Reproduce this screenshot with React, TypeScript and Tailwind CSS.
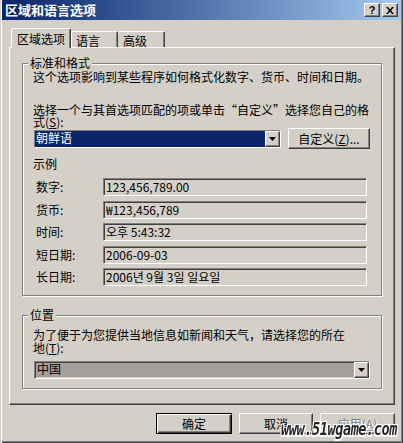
const raised =
  "border border-t-white border-l-white border-b-[#404040] border-r-[#404040] shadow-[inset_-1px_-1px_0_#808080]";
const sunken =
  "border border-t-[#808080] border-l-[#808080] border-b-white border-r-white shadow-[inset_1px_1px_0_#404040,inset_-1px_-1px_0_#d4d0c8]";
const etched =
  "border border-[#808080] shadow-[inset_1px_1px_0_#fff,1px_1px_0_#fff]";

const samples = [
  { label: "数字:", value: "123,456,789.00" },
  { label: "货币:", value: "₩123,456,789" },
  { label: "时间:", value: "오후 5:43:32" },
  { label: "短日期:", value: "2006-09-03" },
  { label: "长日期:", value: "2006년 9월 3일 일요일" },
];

const Arrow = () => (
  <div className={`w-[15px] h-full bg-[#d4d0c8] flex items-center justify-center ${raised}`}>
    <svg width="7" height="4" viewBox="0 0 7 4">
      <path d="M0 0h7L3.5 4z" fill="#000" />
    </svg>
  </div>
);

export default function App() {
  return (
    <div className="relative w-[403px] h-[443px] overflow-hidden bg-[#d4d0c8] text-black text-[12px] leading-[14px] font-['Noto_Sans_CJK_SC','Noto_Sans_CJK_KR',sans-serif] shadow-[inset_1px_0_0_#d4d0c8,inset_2px_0_0_#fff,inset_-1px_0_0_#404040,inset_-2px_0_0_#808080,inset_0_-1px_0_#404040,inset_0_-2px_0_#808080]">
      {/* title bar */}
      <div className="mx-[2px] h-[20px] flex items-center justify-between pl-[3px] pr-[3px] bg-linear-to-r from-[#0a246a] to-[#a6caf0]">
        <span className="text-white font-bold text-[13px] leading-[16px]">区域和语言选项</span>
        <div className="flex gap-[2px]">
          <div className={`w-[16px] h-[14px] bg-[#d4d0c8] flex items-center justify-center ${raised}`}>
            <span className="font-['Liberation_Sans',sans-serif] font-bold text-[11px] leading-[11px]">?</span>
          </div>
          <div className={`w-[16px] h-[14px] bg-[#d4d0c8] flex items-center justify-center ${raised}`}>
            <svg width="8" height="7" viewBox="0 0 8 7">
              <path d="M0 0h2l2 2.5L6 0h2L5 3.5 8 7H6L4 4.5 2 7H0l3-3.5z" fill="#000" />
            </svg>
          </div>
        </div>
      </div>

      <div className="pl-[9px] pr-[8px]">
        {/* tabs */}
        <div className="relative z-10 flex items-end ml-[2px] mt-[8px] h-[20px] -mb-px">
          <div className="h-[20px] w-[60px] bg-[#d4d0c8] flex items-center justify-center rounded-t-[2px] border-l border-t border-r border-l-white border-t-white border-r-[#404040] shadow-[inset_-1px_0_0_#808080]">
            区域选项
          </div>
          <div className="mb-px h-[16px] w-[47px] flex items-center pl-[4px] pt-[2px] rounded-t-[2px] border-l border-t border-r border-l-white border-t-white border-r-[#404040] shadow-[inset_-1px_0_0_#808080]">
            语言
          </div>
          <div className="mb-px h-[16px] w-[47px] flex items-center pl-[5px] pt-[2px] rounded-t-[2px] border-t border-r border-t-white border-r-[#404040] shadow-[inset_-1px_0_0_#808080]">
            高级
          </div>
        </div>

        {/* panel */}
        <div className="h-[358px] border border-t-white border-l-white border-b-[#404040] border-r-[#404040] shadow-[inset_-1px_-1px_0_#808080] px-[12px]">
          <fieldset className={`mt-[8px] ${etched}`}>
            <legend className="ml-[5px] px-[2px] bg-[#d4d0c8] leading-[14px]">标准和格式</legend>
            <div className="px-[10px] pb-[9px]">
              <p className="whitespace-nowrap leading-[14px]">这个选项影响到某些程序如何格式化数字、货币、时间和日期。</p>
              <p className="mt-[20px] whitespace-nowrap leading-[12px]">
                选择一个与其首选项匹配的项或单击“自定义”选择您自己的格
                <br />
                式(<u>S</u>):
              </p>
              <div className="flex items-center h-[21px]">
                <div className={`ml-[1px] w-[247px] h-[18px] flex bg-white ${sunken}`}>
                  <div className="flex-1 bg-[#0a246a] text-white pl-[1px] leading-[14px]">朝鲜语</div>
                  <Arrow />
                </div>
                <div className={`ml-[7px] w-[82px] h-[21px] bg-[#d4d0c8] flex items-center justify-center ${raised}`}>
                  自定义(<u>Z</u>)...
                </div>
              </div>
              <p className="mt-[8px] leading-[14px]">示例</p>
              <div className="mt-[7px] ml-[3px] grid grid-cols-[67px_264px] gap-y-[4.5px]">
                {samples.map((s) => (
                  <div key={s.label} className="contents">
                    <div className="h-[18px] flex items-center">{s.label}</div>
                    <div className={`h-[18px] flex items-center pl-[2px] whitespace-nowrap ${sunken}`}>{s.value}</div>
                  </div>
                ))}
              </div>
            </div>
          </fieldset>

          <fieldset className={`mt-[12px] ${etched}`}>
            <legend className="ml-[5px] px-[2px] bg-[#d4d0c8] leading-[14px]">位置</legend>
            <div className="px-[10px] pb-[9px]">
              <p className="mt-[6px] whitespace-nowrap leading-[13px]">
                为了便于为您提供当地信息如新闻和天气，请选择您的所在
                <br />
                地(<u>T</u>):
              </p>
              <div className={`mt-[7px] ml-[1px] w-[336px] h-[18px] flex bg-[#a4a09c] ${sunken}`}>
                <div className="flex-1 pl-[2px] leading-[14px]">中国</div>
                <Arrow />
              </div>
            </div>
          </fieldset>
        </div>

        {/* buttons */}
        <div className="mt-[8px] flex justify-end gap-[7px]">
          <div className="w-[76px] h-[21px] border border-black bg-[#d4d0c8] flex items-center justify-center shadow-[inset_1px_1px_0_#fff,inset_-1px_-1px_0_#404040,inset_-2px_-2px_0_#808080]">
            确定
          </div>
          <div className={`w-[74px] h-[21px] bg-[#d4d0c8] flex items-center justify-center ${raised}`}>取消</div>
          <div className={`w-[75px] h-[21px] bg-[#d4d0c8] flex items-center justify-center text-[#808080] [text-shadow:1px_1px_0_#fff] ${raised}`}>
            应用(<u>A</u>)
          </div>
        </div>
      </div>

      {/* watermark */}
      <div className="absolute right-[6px] bottom-[5px] origin-bottom scale-y-[1.35] font-['DejaVu_Sans_Mono',monospace] font-bold italic text-[13.5px] leading-[14px] text-[#262626] tracking-[-0.4px] [text-shadow:1px_1px_0_#fff,-1px_-1px_0_#fff,1px_-1px_0_#fff,-1px_1px_0_#fff]">
        www.51wgame.com
      </div>
    </div>
  );
}
